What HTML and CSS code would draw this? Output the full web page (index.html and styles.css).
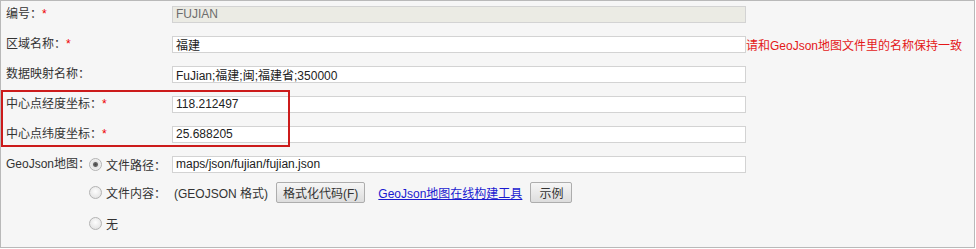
FILE: index.html
```html
<!DOCTYPE html>
<html lang="zh-CN">

<head>
    <meta charset="UTF-8" />
    <meta name="viewport" content="width=device-width, initial-scale=1.0" />
    <title>区域编辑</title>
    <link rel="stylesheet" href="styles.css">
</head>

<body>
    <div class="panel">
        <!-- 基本信息 -->
        <div class="row">
            <label class="label">编号：<em>*</em></label>
            <input class="field" type="text" value="FUJIAN" disabled />
        </div>
        <div class="row">
            <label class="label">区域名称：<em>*</em></label>
            <input class="field" type="text" value="福建" />
            <span class="hint">请和GeoJson地图文件里的名称保持一致</span>
        </div>
        <div class="row">
            <label class="label">数据映射名称：</label>
            <input class="field" type="text" value="FuJian;福建;闽;福建省;350000" />
        </div>

        <!-- 中心点坐标 -->
        <div class="marked">
            <div class="row">
                <label class="label">中心点经度坐标：<em>*</em></label>
                <input class="field" type="text" value="118.212497" />
            </div>
            <div class="row">
                <label class="label">中心点纬度坐标：<em>*</em></label>
                <input class="field" type="text" value="25.688205" />
            </div>
        </div>

        <!-- GeoJson -->
        <div class="row">
            <label class="label short">GeoJson地图：</label>
            <label class="option"><input type="radio" name="geo" checked />文件路径：</label>
            <input class="field" type="text" value="maps/json/fujian/fujian.json" />
        </div>
        <div class="row indent lift">
            <label class="option"><input type="radio" name="geo" />文件内容：</label>
            <span class="tip">(GEOJSON 格式)</span>
            <button class="btn" type="button">格式化代码(F)</button>
            <a class="link" href="#">GeoJson地图在线构建工具</a>
            <button class="btn wide" type="button">示例</button>
        </div>
        <div class="row indent">
            <label class="option"><input type="radio" name="geo" />无</label>
        </div>
    </div>
</body>

</html>
```

FILE: styles.css
```css
body {
    margin: 0;
    font-family: 'Liberation Sans', 'Noto Sans CJK SC', sans-serif;
    font-size: 12px;
    color: #333;
}

.panel {
    width: 973px;
    height: 246px;
    border: 1px solid #b9b9b9;
    background: #f6f6f6;
}

.row {
    display: flex;
    align-items: center;
    height: 30px;
    margin-top: -2px;
    margin-bottom: 2px;
}

.row.lift {
    margin-top: -4px;
    margin-bottom: 3px;
}

.label {
    width: 166px;
    padding-left: 5px;
    line-height: 17px;
    white-space: nowrap;
}

.label em {
    font-style: normal;
    color: #e00;
}

.label.short {
    width: 83px;
}

.field {
    width: 566px;
    height: 15px;
    margin: 0;
    padding: 0 3px;
    border: 1px solid #d3d3d3;
    background: #fff;
    font-family: inherit;
    font-size: 12px;
    color: #222;
    outline: none;
}

.field:disabled {
    background: #ebebe4;
    color: #6d6d6d;
}

.hint {
    color: #e41818;
    white-space: nowrap;
}

.marked {
    position: relative;
}

/* 标注框 */
.marked::after {
    content: "";
    position: absolute;
    left: 0;
    top: 1px;
    width: 285px;
    height: 53px;
    border: 2px solid #cc1b1b;
    pointer-events: none;
}

.indent {
    padding-left: 88px;
}

.option {
    display: flex;
    align-items: center;
    width: 83px;
    white-space: nowrap;
}

.option input {
    appearance: none;
    width: 13px;
    height: 13px;
    margin: 0 4px 0 0;
    border: 1px solid #b3b3b3;
    border-radius: 50%;
    background: radial-gradient(circle at 50% 40%, #fdfdfd, #dcdcdc);
}

.option input:checked {
    background: radial-gradient(circle, #444 0, #666 2px, #e2e2e2 3px, #f4f4f4 6px);
}

.tip {
    margin-left: 2px;
    margin-right: 8px;
    white-space: nowrap;
}

.btn {
    height: 21px;
    padding: 0 6px;
    border: 1px solid #adadad;
    border-radius: 2px;
    background: linear-gradient(#f6f6f6, #dddddd);
    font-family: inherit;
    font-size: 12px;
    color: #333;
}

.btn.wide {
    padding: 0 8px;
}

.link {
    margin: 0 8px 0 13px;
    color: #1a1ad0;
    white-space: nowrap;
}
```
